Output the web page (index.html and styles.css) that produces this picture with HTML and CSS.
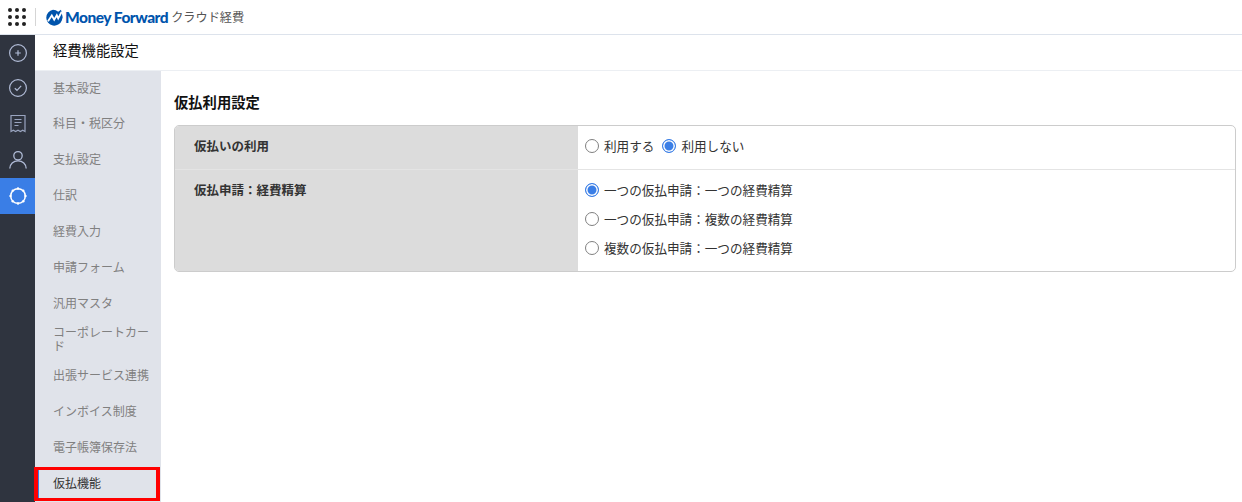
FILE: index.html
```html
<!DOCTYPE html>
<html lang="ja">
<head>
    <meta charset="UTF-8">
    <title>仮払利用設定</title>
    <link rel="stylesheet" href="styles.css">
</head>
<body>
    <header class="top-bar">
        <div class="app-grid">
            <span></span><span></span><span></span>
            <span></span><span></span><span></span>
            <span></span><span></span><span></span>
        </div>
        <div class="logo">
            <svg class="logo-mark" width="18" height="17" viewBox="0 0 18 17">
                <path d="M8 .8a7.900 7.900 0 0 1 5.200 2L16 .8l1.700 7.400-.9 3.200A8 8 0 1 1 8 .8Z" fill="#0054ac"/>
                <path d="M3 12.300 6.800 6.500l2.400 4.300 2.600-4.500 1.400 3.100L16.600 3" fill="none" stroke="#fff" stroke-width="1.800"/>
            </svg>
            <span class="logo-name">Money Forward</span>
            <span class="logo-product">クラウド経費</span>
        </div>
    </header>

    <div class="layout">
        <nav class="rail">
            <a class="rail-item" href="#">
                <svg width="20" height="20" viewBox="0 0 20 20" fill="none" stroke="#b0bbd6" stroke-width="1.200">
                    <circle cx="10" cy="10" r="8.400"/>
                    <path d="M10 7.200v5.600M7.200 10h5.600"/>
                </svg>
            </a>
            <a class="rail-item" href="#">
                <svg width="20" height="20" viewBox="0 0 20 20" fill="none" stroke="#b0bbd6" stroke-width="1.200">
                    <circle cx="10" cy="10" r="8.400"/>
                    <path d="M6.800 10.200 9 12.300 13.200 7.800"/>
                </svg>
            </a>
            <a class="rail-item" href="#">
                <svg width="20" height="20" viewBox="0 0 20 20" fill="none" stroke="#9aa5c0" stroke-width="1.200">
                    <path d="M3 1.500h14v16l-2.300-1.300-2.300 1.300-2.400-1.300-2.400 1.300-2.300-1.300-2.300 1.300Z"/>
                    <path d="M6.500 5.500h7M6.500 8.500h7M6.500 11.500h4"/>
                </svg>
            </a>
            <a class="rail-item" href="#">
                <svg width="20" height="20" viewBox="0 0 20 20" fill="none" stroke="#b0bbd6" stroke-width="1.300">
                    <circle cx="10" cy="5.800" r="4.200"/>
                    <path d="M1.800 18.600c0-4.600 3.600-7.800 8.200-7.800s8.200 3.200 8.200 7.800"/>
                </svg>
            </a>
            <a class="rail-item active" href="#">
                <svg width="20" height="20" viewBox="0 0 20 20" fill="none" stroke="#fff" stroke-width="1.500">
                    <circle cx="10" cy="10" r="7.300"/>
                    <g fill="#fff" stroke="none">
                        <circle cx="10" cy="2.500" r="1.200"/>
                        <circle cx="15.300" cy="4.700" r="1.200"/>
                        <circle cx="17.500" cy="10" r="1.200"/>
                        <circle cx="15.300" cy="15.300" r="1.200"/>
                        <circle cx="10" cy="17.500" r="1.200"/>
                        <circle cx="4.700" cy="15.300" r="1.200"/>
                        <circle cx="2.500" cy="10" r="1.200"/>
                        <circle cx="4.700" cy="4.700" r="1.200"/>
                    </g>
                </svg>
            </a>
        </nav>

        <div class="page">
            <div class="page-title">経費機能設定</div>
            <div class="page-body">
                <ul class="side-nav">
                    <li><a href="#">基本設定</a></li>
                    <li><a href="#">科目・税区分</a></li>
                    <li><a href="#">支払設定</a></li>
                    <li><a href="#">仕訳</a></li>
                    <li><a href="#">経費入力</a></li>
                    <li><a href="#">申請フォーム</a></li>
                    <li><a href="#">汎用マスタ</a></li>
                    <li><a href="#">コーポレートカード</a></li>
                    <li><a href="#">出張サービス連携</a></li>
                    <li><a href="#">インボイス制度</a></li>
                    <li><a href="#">電子帳簿保存法</a></li>
                    <li class="current"><a href="#">仮払機能</a></li>
                </ul>

                <main class="content">
                    <h2>仮払利用設定</h2>
                    <div class="settings">
                        <div class="settings-row">
                            <div class="settings-label">仮払いの利用</div>
                            <div class="settings-value inline">
                                <label><input type="radio" name="use">利用する</label>
                                <label><input type="radio" name="use" checked>利用しない</label>
                            </div>
                        </div>
                        <div class="settings-row">
                            <div class="settings-label">仮払申請：経費精算</div>
                            <div class="settings-value stacked">
                                <label><input type="radio" name="mode" checked>一つの仮払申請：一つの経費精算</label>
                                <label><input type="radio" name="mode">一つの仮払申請：複数の経費精算</label>
                                <label><input type="radio" name="mode">複数の仮払申請：一つの経費精算</label>
                            </div>
                        </div>
                    </div>
                </main>
            </div>
        </div>
    </div>
</body>
</html>
```

FILE: styles.css
```css
* {
    margin: 0;
    padding: 0;
    box-sizing: border-box;
}

html,
body {
    height: 100%;
    overflow: hidden;
}

body {
    display: flex;
    flex-direction: column;
    font-family: "Noto Sans CJK JP", "Liberation Sans", sans-serif;
    font-size: 13px;
    color: #333;
    background: #fff;
}

a {
    color: inherit;
    text-decoration: none;
}

/* Top bar */
.top-bar {
    flex: none;
    height: 35px;
    display: flex;
    align-items: center;
    padding-left: 8px;
    border-bottom: 1px solid #dde3ec;
}

.app-grid {
    display: grid;
    grid-template-columns: repeat(3, 4px);
    gap: 3px;
    padding-right: 9px;
    border-right: 1px solid #d5d5d5;
}

.app-grid span {
    width: 4px;
    height: 4px;
    border-radius: 50%;
    background: #222;
}

.logo {
    display: flex;
    align-items: center;
    margin-left: 9px;
}

.logo-name {
    margin-left: 2px;
    font-family: Lato, "Liberation Sans", sans-serif;
    font-size: 15.500px;
    font-weight: 900;
    letter-spacing: -0.500px;
    color: #0054ac;
    white-space: nowrap;
}

.logo-product {
    margin-left: 3px;
    font-size: 12.200px;
    color: #555;
}

.layout {
    flex: 1;
    display: flex;
    min-height: 0;
}

/* Dark icon rail */
.rail {
    flex: none;
    width: 35px;
    background: #2f343f;
}

.rail-item {
    height: 36px;
    display: flex;
    align-items: center;
    justify-content: center;
}

.rail-item:first-child {
    height: 35px;
}

.rail-item.active {
    background: #3a7ee6;
}

.page {
    flex: 1;
    display: flex;
    flex-direction: column;
    min-width: 0;
}

.page-title {
    flex: none;
    height: 36px;
    padding-left: 18px;
    border-bottom: 1px solid #eceff3;
    font-size: 14.300px;
    line-height: 30px;
    color: #111;
}

.page-body {
    flex: 1;
    display: flex;
    min-height: 0;
}

/* Settings side nav */
.side-nav {
    flex: none;
    width: 126px;
    list-style: none;
    background: #e0e3ea;
    color: #808080;
    font-size: 12px;
}

.side-nav li {
    height: 36px;
    display: flex;
    align-items: center;
    padding: 0 8px 0 18px;
    line-height: 14px;
}

.side-nav li:first-child {
    height: 34px;
}

.side-nav .current {
    position: relative;
    color: #333;
}

/* blue marker of the selected item */
.side-nav .current::before {
    content: "";
    position: absolute;
    top: 5px;
    bottom: 3px;
    left: 3px;
    width: 1px;
    background: #3a7ee6;
}

/* red highlight drawn over the selected item */
.side-nav .current::after {
    content: "";
    position: absolute;
    top: 2px;
    right: 1px;
    bottom: 0;
    left: -1px;
    border: 3px solid #f00;
    border-left-width: 4px;
    border-right-width: 4px;
}

/* Content */
.content {
    flex: 1;
    padding: 21px 6px 0 13px;
    min-width: 0;
}

.content h2 {
    margin-bottom: 14px;
    font-size: 14.300px;
    font-weight: 700;
    line-height: 19px;
    color: #111;
}

.settings {
    border: 1px solid #ccc;
    border-radius: 5px;
    overflow: hidden;
}

.settings-row {
    display: flex;
}

.settings-row + .settings-row {
    border-top: 1px solid #e4e4e4;
}

.settings-label {
    flex: none;
    width: 403px;
    padding: 11px 19px;
    background: #dcdcdc;
    font-size: 12.500px;
    font-weight: 700;
    line-height: 18px;
}

.settings-value {
    flex: 1;
    padding: 11px 6px 14px 7px;
    font-size: 12.600px;
    line-height: 18px;
}

.settings-value label {
    display: flex;
    align-items: center;
    gap: 5px;
}

.settings-value input {
    appearance: none;
    width: 14px;
    height: 14px;
    margin: 0;
    border: 1.700px solid #808080;
    border-radius: 50%;
    background: #fff;
}

.settings-value input:checked {
    border-color: #3a7ee6;
    background: #3a7ee6;
    box-shadow: inset 0 0 0 1.500px #fff;
}

.inline {
    display: flex;
    gap: 8px;
}

.stacked {
    display: flex;
    flex-direction: column;
    gap: 11px;
}
```
